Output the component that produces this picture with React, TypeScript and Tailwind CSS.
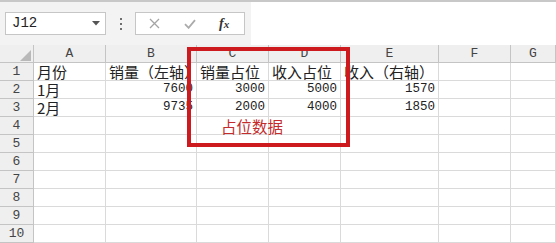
import React from "react";

const cjk = { fontFamily: '"Noto Sans CJK SC", sans-serif' };
const mono = { fontFamily: '"Liberation Mono", "Noto Sans CJK SC", monospace' };

const cols = ["A", "B", "C", "D", "E", "F", "G"];

type Cell = { text: string; num?: boolean };

const rows: Cell[][] = [
  [{ text: "月份" }, { text: "销量（左轴）" }, { text: "销量占位" }, { text: "收入占位" }, { text: "收入（右轴）" }, { text: "" }, { text: "" }],
  [{ text: "1月" }, { text: "7600", num: true }, { text: "3000", num: true }, { text: "5000", num: true }, { text: "1570", num: true }, { text: "" }, { text: "" }],
  [{ text: "2月" }, { text: "9735", num: true }, { text: "2000", num: true }, { text: "4000", num: true }, { text: "1850", num: true }, { text: "" }, { text: "" }],
];

export default function App() {
  return (
    <div className="w-[556px] h-[243px] overflow-hidden bg-white flex flex-col">
      {/* formula bar */}
      <div className="flex h-[45px] shrink-0 border-t-2 border-[#c8c8c8]">
        <div className="flex w-[251px] items-start bg-[#f3f3f3] pl-[5px] pt-[10px]">
          <div className="flex h-[23px] w-[101px] items-center justify-between border border-[#c6c6c6] bg-white pl-[6px] pr-[5px]">
            <span className="text-[14px] text-[#222]" style={mono}>
              J12
            </span>
            <svg width="8" height="5" viewBox="0 0 8 5">
              <path d="M0 0h8L4 4.5z" fill="#555" />
            </svg>
          </div>
          <div className="ml-[14px] mr-[13px] flex h-[23px] flex-col items-center justify-center gap-[3px]">
            <span className="h-[2px] w-[2px] bg-[#6f6f6f]" />
            <span className="h-[2px] w-[2px] bg-[#6f6f6f]" />
            <span className="h-[2px] w-[2px] bg-[#6f6f6f]" />
          </div>
          <div className="flex h-[23px] w-[110px] items-center border border-[#c6c6c6] bg-white">
            <svg width="11" height="11" viewBox="0 0 11 11" className="ml-[13px]">
              <path d="M1 1l9 9M10 1l-9 9" stroke="#a4a4a4" strokeWidth="1.3" />
            </svg>
            <svg width="12" height="10" viewBox="0 0 12 10" className="ml-[24px]">
              <path d="M1 5.2l3.6 3.6L11 1.2" stroke="#ababab" strokeWidth="1.8" fill="none" />
            </svg>
            <span
              className="ml-[23px] text-[14px] font-bold italic text-[#333]"
              style={{ fontFamily: '"Liberation Serif", serif' }}>
              f<span className="text-[11px]">x</span>
            </span>
          </div>
        </div>
        <div className="flex-1 bg-white" />
      </div>

      {/* sheet */}
      <div className="relative flex-1">
        <div className="grid grid-cols-[34px_72px_91px_72px_72px_98px_72px_1fr] auto-rows-[18px]">
          <div className="relative border-r border-b border-[#c4c4c4] bg-[#efefef]">
            <svg width="11" height="11" viewBox="0 0 11 11" className="absolute right-[2px] bottom-[1px]">
              <path d="M11 0v11H0z" fill="#b9b9b9" />
            </svg>
          </div>
          {cols.map((c) => (
            <div
              key={c}
              className="flex items-center justify-center border-r border-b border-[#c4c4c4] bg-[#efefef] text-[13px] leading-[17px] text-[#444]"
              style={mono}>
              {c}
            </div>
          ))}

          {Array.from({ length: 10 }).map((_, r) => (
            <React.Fragment key={r}>
              <div
                className="flex items-center justify-center border-r border-b border-[#c4c4c4] bg-[#efefef] text-[13px] leading-[17px] text-[#444]"
                style={mono}>
                {r + 1}
              </div>
              {cols.map((c, ci) => {
                const cell = rows[r]?.[ci];
                return (
                  <div
                    key={c}
                    className={`overflow-hidden whitespace-nowrap border-r border-b border-[#dadada] leading-[17px] text-[#222] ${
                      cell?.num ? "pr-[3px] text-right text-[12.5px]" : "pl-[3px] text-[15px]"
                    }`}
                    style={cell?.num ? mono : cjk}>
                    {cell?.text}
                  </div>
                );
              })}
            </React.Fragment>
          ))}
        </div>

        {/* highlight box */}
        <div className="absolute left-[187px] top-[2px] h-[100px] w-[163px] border-[4px] border-[#cc1a1f]" />
        <div className="absolute left-[221px] top-[74px] text-[15.5px] leading-none text-[#c42b2b]" style={cjk}>
          占位数据
        </div>
      </div>
    </div>
  );
}
